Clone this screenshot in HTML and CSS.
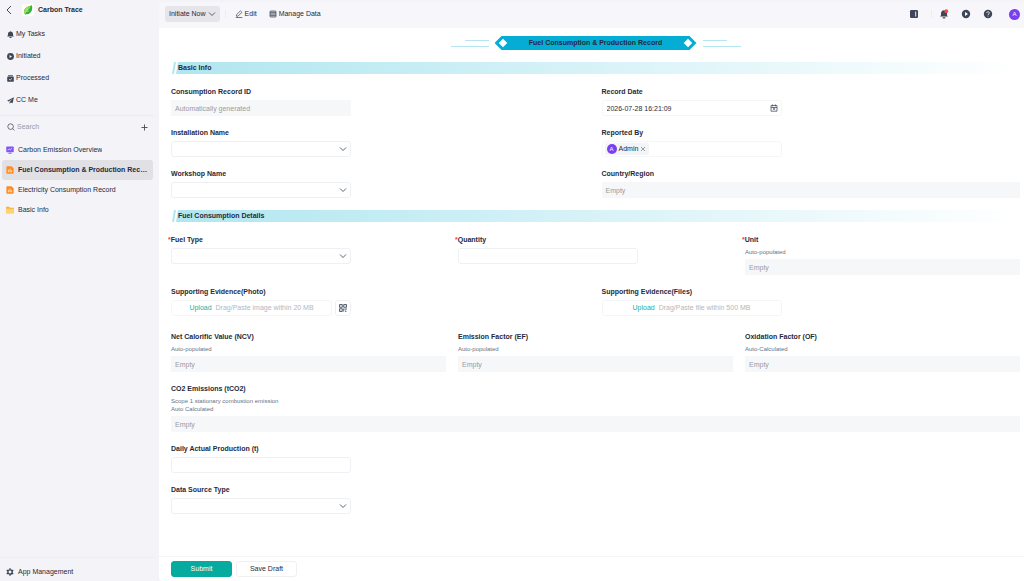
FILE: index.html
```html
<!DOCTYPE html>
<html lang="en">
    <head>
        <meta charset="UTF-8">
        <meta name="viewport" content="width=device-width, initial-scale=1.0">
        <title>Carbon Trace</title>
        <link rel="stylesheet" href="styles.css">
    </head>
    <body>
        <aside class="sidebar">
            <div class="app-title">
                <button type="button" class="icon-button" aria-label="Back">
                    <svg class="icon-back" viewBox="0 0 10 10"><path d="M7 1 3 5l4 4" fill="none" stroke="#3d4757" stroke-width="1"/></svg>
                </button>
                <span class="logo">
                    <svg viewBox="0 0 12 12"><path d="M1.600 11.200C0 6 2.500 2.200 10.800.2c1 5.500-.6 9.900-6 11-1.200.2-2.400.300-3.200 0z" fill="#35b335"/><path d="M1.600 11.200C0 6 2.500 2.200 10.800.2 6.500 3.500 4 6.500 2.600 9.800z" fill="#8cdd3c"/><path d="M1.500 11.600C3 8 5.500 5 8.300 3M4.200 7.500l2.800-.2M5 6.400l-.2-2" fill="none" stroke="#fff" stroke-width=".6"/></svg>
                </span>
                <strong>Carbon Trace</strong>
            </div>
            <nav class="task-nav">
                <a href="#">
                    <svg viewBox="0 0 10 10"><path d="M5 .2c.6 0 1 .4 1 .9 1.800.5 2.600 1.600 2.600 3.100v1.900L9.900 7.900H.1l1.300-1.800V4.200C1.400 2.700 2.200 1.600 4 1.100c0-.5.4-.9 1-.9zM3.200 8.500h3.600L6 9.900H4z"/></svg>
                    My Tasks
                </a>
                <a href="#">
                    <svg viewBox="0 0 10 10"><circle cx="5" cy="5" r="4.900"/><path d="M3.700 2.900v4.200L7.200 5z" fill="#f3f3f8"/></svg>
                    Initiated
                </a>
                <a href="#">
                    <svg viewBox="0 0 10 10"><path d="M1.500.4h7v1.300h-7z"/><rect x=".3" y="2.300" width="9.400" height="7.500" rx="1.200"/><path d="m3 5.800 1.500 1.500L7.200 4.700" fill="none" stroke="#f3f3f8" stroke-width="1.100"/></svg>
                    Processed
                </a>
                <a href="#">
                    <svg viewBox="0 0 10 10"><path d="M9.900.5.1 5.400l2.500 1.200L8 2.600 3.700 7v2.800l1.700-1.900 2.600 1.200z"/></svg>
                    CC Me
                </a>
            </nav>
            <div class="search">
                <label for="search">
                    <svg viewBox="0 0 10 10"><circle cx="4.500" cy="4.500" r="3.500" fill="none" stroke="#4a5464" stroke-width="1"/><path d="m7 7 2.300 2.300" stroke="#4a5464" stroke-width="1"/></svg>
                </label>
                <input type="text" id="search" placeholder="Search">
                <button type="button" class="icon-button" aria-label="Add">
                    <svg class="icon-plus" viewBox="0 0 8 8"><path d="M4 .5v7M.5 4h7" stroke="#3d4757" stroke-width="1"/></svg>
                </button>
            </div>
            <nav class="page-nav">
                <a href="#">
                    <svg viewBox="0 0 10 10"><rect x=".3" y=".5" width="9.400" height="7.300" rx="1" fill="#8257f5"/><path d="M5 7v2M3 9.300h4" stroke="#8257f5" stroke-width=".9"/><path d="m2.300 5.300 1.600-1.600 1.300 1.200 2.300-2.200" fill="none" stroke="#fff" stroke-width=".8"/></svg>
                    <span>Carbon Emission Overview</span>
                </a>
                <a href="#" class="active">
                    <svg viewBox="0 0 10 10"><path d="M1.500.2h5.300L9.500 2.800v6a1 1 0 0 1-1 1h-7a1 1 0 0 1-1-1V1.200a1 1 0 0 1 1-1z" fill="#ff8a1f"/><path d="M3 4.800v3M5 3.300v4.500M7 5.500v2.300" stroke="#fff" stroke-width=".9"/></svg>
                    <span>Fuel Consumption &amp; Production Record</span>
                </a>
                <a href="#">
                    <svg viewBox="0 0 10 10"><path d="M1.500.2h5.300L9.500 2.800v6a1 1 0 0 1-1 1h-7a1 1 0 0 1-1-1V1.200a1 1 0 0 1 1-1z" fill="#ff8a1f"/><path d="M3 4.800v3M5 3.300v4.500M7 5.500v2.300" stroke="#fff" stroke-width=".9"/></svg>
                    <span>Electricity Consumption Record</span>
                </a>
                <a href="#">
                    <svg viewBox="0 0 10 10"><path d="M.2 1h3.800l1 1.300h4.800v6.900H.2z" fill="#f3ae38"/><path d="M.2 3.300h9.600v5.900H.2z" fill="#ffd272"/></svg>
                    <span>Basic Info</span>
                </a>
            </nav>
            <a href="#" class="app-management">
                <svg viewBox="0 0 10 10"><circle cx="5" cy="5" r="2.700" fill="none" stroke="#3d4757" stroke-width="1.700"/><path d="M5 .3v1.900M5 7.800v1.900M.9 2.700l1.700.9M7.400 6.400l1.700.9M.9 7.300l1.700-.9M7.400 3.600l1.700-.9" stroke="#3d4757" stroke-width="1.700"/></svg>
                App Management
            </a>
        </aside>

        <main class="main">
            <header class="toolbar">
                <button type="button" class="initiate">
                    Initiate Now
                    <svg viewBox="0 0 8 8"><path d="m1 2.500 3 3 3-3" fill="none" stroke="#4a5464" stroke-width=".9"/></svg>
                </button>
                <span class="separator"></span>
                <button type="button" class="tool">
                    <svg viewBox="0 0 8 8"><path d="M1.500 6.200V4.700L5.400.9l1.500 1.400L3 6.200zM.8 7.500h6.500" fill="none" stroke="#4a5464" stroke-width=".8"/></svg>
                    Edit
                </button>
                <button type="button" class="tool">
                    <svg viewBox="0 0 8 8"><rect x="1" y="1" width="6" height="6" rx=".6" fill="#c9ccd3" stroke="#4a5464" stroke-width=".8"/><path d="M1 2.500h6M1 4h6M1 5.500h6" stroke="#4a5464" stroke-width=".7"/></svg>
                    Manage Data
                </button>
                <div class="tools">
                    <button type="button" class="icon-button" aria-label="Panel">
                        <svg viewBox="0 0 10 10"><rect x="1" y="1" width="8" height="8" rx="1.300" fill="#3d4757"/><path d="M6.700 2.500v5" stroke="#fff" stroke-width=".9"/></svg>
                    </button>
                    <span class="separator"></span>
                    <button type="button" class="icon-button" aria-label="Notifications">
                        <svg viewBox="0 0 10 10"><path d="M5 1.200c2 .1 3 1.400 3 3.100v2l1 1.300H1l1-1.300v-2C2 2.600 3 1.300 5 1.200zM3.500 8.200h3L6 9.500H4z" fill="#3d4757"/><circle cx="7.300" cy="2.200" r="1.900" fill="#f5484d"/></svg>
                    </button>
                    <button type="button" class="icon-button" aria-label="Play">
                        <svg viewBox="0 0 10 10"><circle cx="5" cy="5" r="4.200" fill="#3d4757"/><path d="M4 3.100v3.800L7 5z" fill="#fff"/></svg>
                    </button>
                    <button type="button" class="icon-button" aria-label="Help">
                        <svg viewBox="0 0 10 10"><circle cx="5" cy="5" r="4.200" fill="#3d4757"/><path d="M3.700 4c0-1.700 2.700-1.700 2.700-.1C6.400 5 5 4.900 5 6M5 6.700v.8" fill="none" stroke="#fff" stroke-width=".8"/></svg>
                    </button>
                    <span class="avatar">A</span>
                </div>
            </header>

            <form class="form" id="record">
                <div class="banner">
                    <svg viewBox="0 0 38 14"><path d="M14 4.500h24M0 10.500h38" stroke="#b5e6f0" stroke-width="1"/></svg>
                    <h1><i></i>Fuel Consumption &amp; Production Record<i></i></h1>
                    <svg viewBox="0 0 38 14"><path d="M0 4.500h24M0 10.500h38" stroke="#b5e6f0" stroke-width="1"/></svg>
                </div>

                <h2>Basic Info</h2>
                <div class="row two">
                    <div class="field">
                        <label for="record-id">Consumption Record ID</label>
                        <input type="text" id="record-id" class="short filled" placeholder="Automatically generated" readonly>
                    </div>
                    <div class="field">
                        <label for="date">Record Date</label>
                        <div class="control short light">
                            <input type="text" id="date" value="2026-07-28 16:21:09">
                            <svg viewBox="0 0 8 8"><path d="M1 1.500h6v5.700H1zM1 3.500h6M2.600.4v2M5.400.4v2M4 3.500v2.300M2.800 5h2.400" fill="none" stroke="#4a5464" stroke-width=".8"/></svg>
                        </div>
                    </div>
                </div>
                <div class="row two">
                    <div class="field">
                        <label for="installation">Installation Name</label>
                        <div class="control short">
                            <select id="installation"><option></option></select>
                            <svg viewBox="0 0 8 8"><path d="m1 2.500 3 3 3-3" fill="none" stroke="#4a5464" stroke-width=".9"/></svg>
                        </div>
                    </div>
                    <div class="field">
                        <span class="label">Reported By</span>
                        <div class="people short">
                            <span class="tag">
                                <span class="avatar small">A</span>
                                Admin
                                <button type="button" class="icon-button" aria-label="Remove Admin">
                                    <svg viewBox="0 0 6 6"><path d="m1 1 4 4M5 1 1 5" stroke="#6b7380" stroke-width=".7"/></svg>
                                </button>
                            </span>
                        </div>
                    </div>
                </div>
                <div class="row two">
                    <div class="field">
                        <label for="workshop">Workshop Name</label>
                        <div class="control short">
                            <select id="workshop"><option></option></select>
                            <svg viewBox="0 0 8 8"><path d="m1 2.500 3 3 3-3" fill="none" stroke="#4a5464" stroke-width=".9"/></svg>
                        </div>
                    </div>
                    <div class="field">
                        <label for="country">Country/Region</label>
                        <input type="text" id="country" class="filled" placeholder="Empty" readonly>
                    </div>
                </div>

                <h2>Fuel Consumption Details</h2>
                <div class="row three">
                    <div class="field">
                        <label for="fuel" class="required">Fuel Type</label>
                        <div class="control short">
                            <select id="fuel"><option></option></select>
                            <svg viewBox="0 0 8 8"><path d="m1 2.500 3 3 3-3" fill="none" stroke="#4a5464" stroke-width=".9"/></svg>
                        </div>
                    </div>
                    <div class="field">
                        <label for="quantity" class="required">Quantity</label>
                        <input type="text" id="quantity" class="short">
                    </div>
                    <div class="field">
                        <label for="unit" class="required">Unit</label>
                        <p>Auto-populated</p>
                        <input type="text" id="unit" class="filled" placeholder="Empty" readonly>
                    </div>
                </div>
                <div class="row two uploads">
                    <div class="field">
                        <span class="label">Supporting Evidence(Photo)</span>
                        <div class="photo short">
                            <button type="button" class="upload"><b>Upload</b>Drag/Paste image within 20 MB</button>
                            <button type="button" class="scan" aria-label="Scan code">
                                <svg viewBox="0 0 8 8"><path d="M.5.5h2.800v2.800H.5zM4.700.5h2.800v2.800H4.700zM.5 4.700h2.800v2.800H.5zM4.700 4.500v3M6.200 4.300v2M7.500 4.500v1M6 7.300h1.500" fill="none" stroke="#4a5464" stroke-width=".9"/><path d="M1.500 1.500h.8v.8h-.8zM5.700 1.500h.8v.8h-.8zM1.500 5.700h.8v.8h-.8z" fill="#4a5464"/></svg>
                            </button>
                        </div>
                    </div>
                    <div class="field">
                        <span class="label">Supporting Evidence(Files)</span>
                        <button type="button" class="upload short"><b>Upload</b>Drag/Paste file within 500 MB</button>
                    </div>
                </div>
                <div class="row three">
                    <div class="field">
                        <label for="ncv">Net Calorific Value (NCV)</label>
                        <p>Auto-populated</p>
                        <input type="text" id="ncv" class="filled" placeholder="Empty" readonly>
                    </div>
                    <div class="field">
                        <label for="ef">Emission Factor (EF)</label>
                        <p>Auto-populated</p>
                        <input type="text" id="ef" class="filled" placeholder="Empty" readonly>
                    </div>
                    <div class="field">
                        <label for="of">Oxidation Factor (OF)</label>
                        <p>Auto-Calculated</p>
                        <input type="text" id="of" class="filled" placeholder="Empty" readonly>
                    </div>
                </div>
                <div class="row">
                    <div class="field">
                        <label for="co2">CO2 Emissions (tCO2)</label>
                        <p>Scope 1 stationary combustion emission<br>Auto Calculated</p>
                        <input type="text" id="co2" class="filled" placeholder="Empty" readonly>
                    </div>
                </div>
                <div class="row">
                    <div class="field">
                        <label for="production">Daily Actual Production (t)</label>
                        <input type="text" id="production" class="short">
                    </div>
                </div>
                <div class="row">
                    <div class="field">
                        <label for="source">Data Source Type</label>
                        <div class="control short">
                            <select id="source"><option></option></select>
                            <svg viewBox="0 0 8 8"><path d="m1 2.500 3 3 3-3" fill="none" stroke="#4a5464" stroke-width=".9"/></svg>
                        </div>
                    </div>
                </div>
            </form>

            <footer class="actions">
                <button type="submit" form="record" class="submit">Submit</button>
                <button type="button" class="draft">Save Draft</button>
            </footer>
        </main>
    </body>
</html>
```
FILE: styles.css
```css
* {
    box-sizing: border-box;
}
body {
    margin: 0;
    display: flex;
    min-height: 100vh;
    background-color: #f3f3f8;
    color: #1f2a3c;
    font-family: "Liberation Sans", Arial, sans-serif;
    font-size: 7px;
    line-height: 12px;
}
button, input, select {
    font: inherit;
    color: inherit;
    margin: 0;
}
button {
    cursor: pointer;
}
a {
    color: inherit;
    text-decoration: none;
}
svg {
    display: block;
    flex: none;
    width: 8px;
    height: 8px;
}
.icon-button {
    display: flex;
    padding: 0;
    border: none;
    background: none;
}

/* sidebar */
.sidebar {
    flex: none;
    width: 159px;
    display: flex;
    flex-direction: column;
}
.app-title {
    display: flex;
    align-items: center;
    height: 20px;
    margin-bottom: 3px;
    padding-left: 4px;
}
.app-title .icon-back {
    width: 10px;
    height: 10px;
}
.logo {
    margin: 0 4px 0 8px;
    padding: 1px;
    border-radius: 2px;
    background-color: #fff;
}
.logo svg {
    width: 10px;
    height: 10px;
}
.task-nav {
    display: flex;
    flex-direction: column;
    margin-right: 5px;
    padding-bottom: 4px;
    border-bottom: 1px solid #ebebf0;
}
.task-nav a {
    display: flex;
    align-items: center;
    gap: 2px;
    height: 22px;
    padding-left: 7px;
}
.task-nav svg {
    width: 7px;
    height: 7px;
    fill: #3d4757;
}
.search {
    display: flex;
    align-items: center;
    height: 22px;
    margin-bottom: 2px;
    padding: 0 11px 0 7px;
}
.search input {
    flex: 1;
    min-width: 0;
    padding: 0 2px;
    border: none;
    outline: none;
    background: none;
}
.search .icon-plus {
    width: 7px;
    height: 7px;
}
input::placeholder {
    overflow: visible;
    color: #969ba6;
    line-height: 12px;
    opacity: 1;
}
.page-nav {
    display: flex;
    flex-direction: column;
    padding: 0 6px 0 2px;
}
.page-nav a {
    display: flex;
    align-items: center;
    gap: 4px;
    height: 20px;
    padding: 0 4px;
    border-radius: 3px;
}
.page-nav span {
    overflow: hidden;
    white-space: nowrap;
    text-overflow: ellipsis;
}
.page-nav .active {
    background-color: #e0e0e5;
    font-weight: bold;
}
.app-management {
    display: flex;
    align-items: center;
    gap: 4px;
    height: 24px;
    margin: auto 5px 0 0;
    padding: 5px 0 0 6px;
    border-top: 1px solid #ededf2;
}

/* toolbar */
.main {
    flex: 1;
    min-width: 0;
    display: flex;
    flex-direction: column;
    margin-top: 2px;
    border-radius: 4px 0 0 4px;
    background-color: #fff;
    overflow: hidden;
}
.toolbar {
    display: flex;
    align-items: center;
    height: 26px;
    padding: 0 4px 2px 6px;
    background-color: #f7f7fb;
}
.toolbar button {
    display: flex;
    align-items: center;
    gap: 2px;
    border: none;
    background: none;
}
.toolbar .initiate {
    height: 16px;
    padding: 0 4px;
    border-radius: 3px;
    background-color: #e5e5ea;
}
.separator {
    width: 1px;
    height: 8px;
    margin: 0 5px;
    background-color: #ececf1;
}
.toolbar .tool {
    padding: 0 4px;
    margin-right: 4px;
}
.tools {
    display: flex;
    align-items: center;
    gap: 12px;
    margin-left: auto;
}
.tools .separator {
    margin: 0 -5px 0 0;
}
.tools .icon-button svg {
    width: 10px;
    height: 10px;
}
.avatar {
    width: 11px;
    height: 11px;
    border-radius: 50%;
    background-color: #7a3ff0;
    color: #fff;
    font-size: 6px;
    line-height: 11px;
    text-align: center;
}
.tools .avatar {
    margin-left: 4px;
}
.avatar.small {
    width: 10px;
    height: 10px;
    line-height: 10px;
}

/* form */
.form {
    flex: 1;
    padding: 8px 4px 24px 12px;
}
.banner {
    display: flex;
    justify-content: center;
    gap: 6px;
    height: 14px;
}
.banner svg {
    width: 38px;
    height: 14px;
}
.banner h1 {
    display: flex;
    align-items: center;
    justify-content: space-between;
    width: 202px;
    height: 14px;
    margin: 0;
    padding: 0 5px;
    background-color: #05add4;
    clip-path: polygon(7px 0, calc(100% - 7px) 0, 100% 50%, calc(100% - 7px) 100%, 7px 100%, 0 50%);
    font-size: 7px;
}
.banner i {
    width: 6px;
    height: 6px;
    background-color: #fff;
    transform: rotate(45deg);
}
.form h2 {
    height: 12px;
    margin: 12px 0;
    padding-left: 7px;
    background: linear-gradient(to right, #b0e6f0, #fff);
    clip-path: polygon(3px 0, 5px 0, 3px 100%, 5px 100%, 7px 0, 100% 0, 100% 100%, 1px 100%);
    font-size: 7px;
}
.row {
    display: grid;
    gap: 12px;
    margin-bottom: 11px;
}
.two {
    grid-template-columns: 1fr 1fr;
}
.three {
    grid-template-columns: 1fr 1fr 1fr;
}
.uploads {
    margin-bottom: 15px;
}
.field {
    display: flex;
    flex-direction: column;
    min-width: 0;
}
.field label, .label {
    margin-bottom: 2px;
    font-weight: bold;
}
.required::before {
    content: "*";
    margin-left: -3px;
    color: #f04438;
}
.field p {
    margin: 0 0 3px;
    color: #697282;
    font-size: 6px;
    line-height: 8px;
}
.field input, .field select, .people, .upload, .scan {
    width: 100%;
    height: 16px;
    padding: 0 4px;
    border: 1px solid #eff0f3;
    border-radius: 3px;
    background-color: #fff;
}
.field select {
    appearance: none;
}
.field .filled {
    border: none;
    border-radius: 1px;
    background-color: #f6f7f9;
}
.field .short {
    width: 100%;
    max-width: 180px;
}
.field .people, .field .upload, .light input {
    border-color: #f5f6f8;
}
.control {
    display: grid;
    align-items: center;
}
.control > * {
    grid-area: 1 / 1;
}
.control svg {
    justify-self: end;
    margin-right: 4px;
    pointer-events: none;
}
.people {
    display: flex;
    align-items: center;
    padding: 0 2px;
}
.tag {
    display: flex;
    align-items: center;
    gap: 2px;
    height: 12px;
    padding: 0 3px 0 2px;
    border-radius: 2px;
    background-color: #f3f4f6;
}
.tag svg {
    width: 6px;
    height: 6px;
}
.photo {
    display: flex;
    gap: 3px;
}
.upload {
    color: #b3b7c0;
}
.upload b {
    margin-right: 4px;
    color: #12b3a4;
    font-weight: normal;
}
.scan {
    flex: none;
    display: flex;
    align-items: center;
    justify-content: center;
}
.photo .scan {
    width: 16px;
}

/* footer */
.actions {
    display: flex;
    align-items: center;
    gap: 4px;
    height: 25px;
    padding-left: 12px;
    border-top: 1px solid #f5f5f8;
}
.actions button {
    width: 61px;
    height: 16px;
    padding: 0;
    border: 1px solid #eff0f3;
    border-radius: 3px;
    background-color: #fff;
}
.actions .submit {
    border-color: #05ab9f;
    background-color: #05ab9f;
    color: #fff;
}
```
